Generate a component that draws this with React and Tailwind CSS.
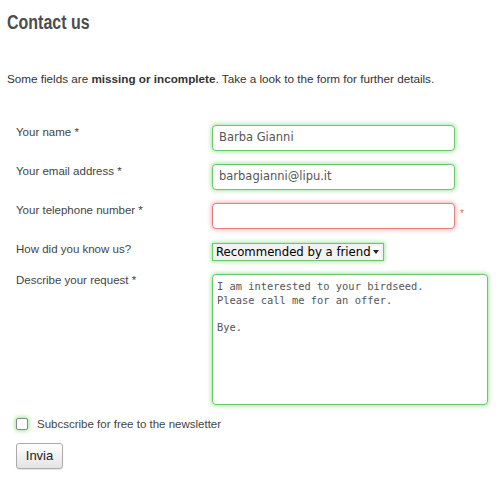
const ROWS = [
  { label: "Your name *", value: "Barba Gianni", state: "ok" },
  { label: "Your email address *", value: "barbagianni@lipu.it", state: "ok" },
  { label: "Your telephone number *", value: "", state: "error" },
];

const ok = "border-[#6cc66c] shadow-[0_0_4px_1px_#a6e6a6]";
const bad = "border-[#dc8080] shadow-[0_0_4px_1px_#f2b4b4]";

export default function App() {
  return (
    <div className="min-h-screen bg-white text-[#444] font-['Liberation_Sans',Arial,sans-serif]">
      <div className="pl-[7px] pt-[10px]">
        <h1 className="inline-block origin-left scale-x-[0.8] text-[20px] leading-[24px] font-bold text-[#4d4d4d]">
          Contact us
        </h1>
      </div>

      <p className="pl-[7px] mt-[36px] text-[11.7px] leading-[14px] text-[#333]">
        Some fields are <b>missing or incomplete</b>. Take a look to the form
        for further details.
      </p>

      <div className="pl-[16px] mt-[39px] flex flex-col">
        {ROWS.map(({ label, value, state }, i) => (
          <div key={label} className={`flex items-start ${i ? "mt-[13px]" : ""}`}>
            <div className="w-[196px] text-[11.5px] leading-[14px]">{label}</div>
            <div
              className={`w-[243px] h-[26px] rounded-[4px] border bg-white flex items-center pl-[6px] text-[11.5px] text-[#555] font-['DejaVu_Sans',sans-serif] ${
                state === "ok" ? ok : bad
              }`}
            >
              {value}
            </div>
            {state === "error" && (
              <span className="ml-[5px] mt-[5px] text-[10px] leading-[12px] text-[#d66]">
                *
              </span>
            )}
          </div>
        ))}

        <div className="flex items-start mt-[14px]">
          <div className="w-[196px] text-[11.5px] leading-[14px] -mt-[1px]">
            How did you know us?
          </div>
          <div
            className={`w-[172px] h-[18px] border bg-[#f2f2f2] flex items-center justify-between pl-[3px] pr-[2px] ${ok}`}
          >
            <span className="text-[11.7px] leading-[14px] text-black font-['DejaVu_Sans',sans-serif]">
              Recommended by a friend
            </span>
            <span className="w-[10px] h-[13px] bg-white flex items-center justify-center">
              <svg width="6" height="4" viewBox="0 0 6 4">
                <path d="M0 0h6L3 4z" fill="#222" />
              </svg>
            </span>
          </div>
        </div>

        <div className="flex items-start mt-[13px]">
          <div className="w-[196px] text-[11.5px] leading-[14px] -mt-[1px]">
            Describe your request *
          </div>
          <div
            className={`w-[276px] h-[131px] rounded-[4px] border bg-white pl-[4px] pt-[5px] whitespace-pre text-[10.4px] leading-[13.5px] text-[#555] font-['DejaVu_Sans_Mono',monospace] ${ok}`}
          >
            {"I am interested to your birdseed.\nPlease call me for an offer.\n\nBye."}
          </div>
        </div>

        <div className="flex items-center mt-[12px]">
          <span className="w-[12px] h-[12px] rounded-[2px] border bg-white border-[#888] shadow-[0_0_4px_1px_#9ee49e]" />
          <span className="ml-[9px] text-[11.5px] leading-[14px]">
            Subcscribe for free to the newsletter
          </span>
        </div>

        <div className="mt-[12px]">
          <button className="w-[47px] h-[26px] rounded-[3px] border border-[#aaa] bg-gradient-to-b from-white to-[#e4e4e4] shadow-[0_1px_1px_rgba(0,0,0,0.1)] text-[13px] text-[#222]">
            Invia
          </button>
        </div>
      </div>
    </div>
  );
}
